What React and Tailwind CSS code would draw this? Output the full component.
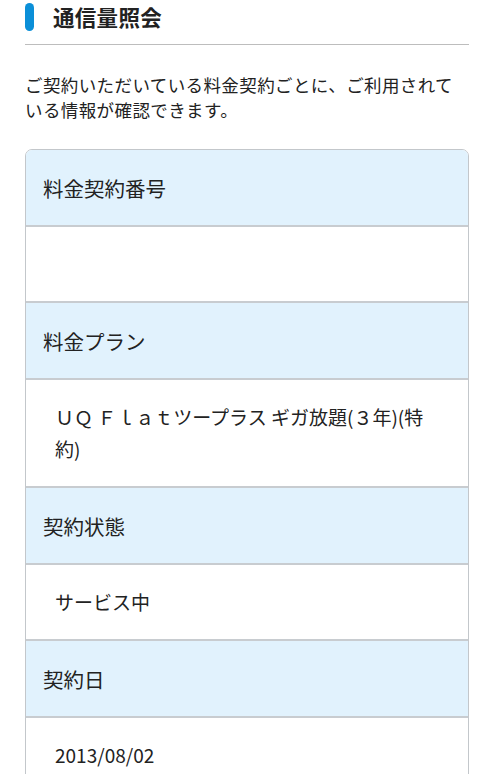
import React from "react";

const rows = [
  { label: "料金契約番号", value: "" },
  { label: "料金プラン", value: "ＵＱ Ｆｌａｔツープラス ギガ放題(３年)(特約)" },
  { label: "契約状態", value: "サービス中" },
  { label: "契約日", value: "2013/08/02" },
];

export default function App() {
  return (
    <div
      className="min-h-screen bg-white text-[#222]"
      style={{ fontFamily: '"Noto Sans CJK JP", Roboto, sans-serif' }}
    >
      <div className="pl-[25px] pr-[11px] pt-[3px]">
        {/* Title */}
        <div className="flex items-center h-[28px]">
          <span className="w-[9px] h-[28px] rounded-full bg-[#0b8fd8]" />
          <h1 className="ml-[19px] text-[21.5px] font-bold leading-none tracking-[0.3px]">通信量照会</h1>
        </div>
        <div className="mt-[13px] border-t border-[#bdbdbd]" />

        <p className="mt-[28px] text-[17.5px] leading-[24.5px] tracking-[0.4px]">
          ご契約いただいている料金契約ごとに、ご利用されて
          <br />
          いる情報が確認できます。
        </p>

        {/* Table */}
        <div className="mt-[27px] border border-[#c3c7cb] rounded-[7px] overflow-hidden">
          {rows.map((row, i) => (
            <div key={row.label}>
              <div
                className={
                  "bg-[#e1f2fd] pl-[17px] pr-4 py-[21.5px] text-[20.5px] leading-[32px]" +
                  (i > 0 ? " border-t-2 border-[#c8ccd0]" : "")
                }
              >
                {row.label}
              </div>
              <div className="border-t-2 border-[#c8ccd0] pl-[29px] pr-[30px] py-[21px] text-[19px] leading-[32px] min-h-[76px]">
                {row.value}
              </div>
            </div>
          ))}
        </div>
      </div>
    </div>
  );
}
